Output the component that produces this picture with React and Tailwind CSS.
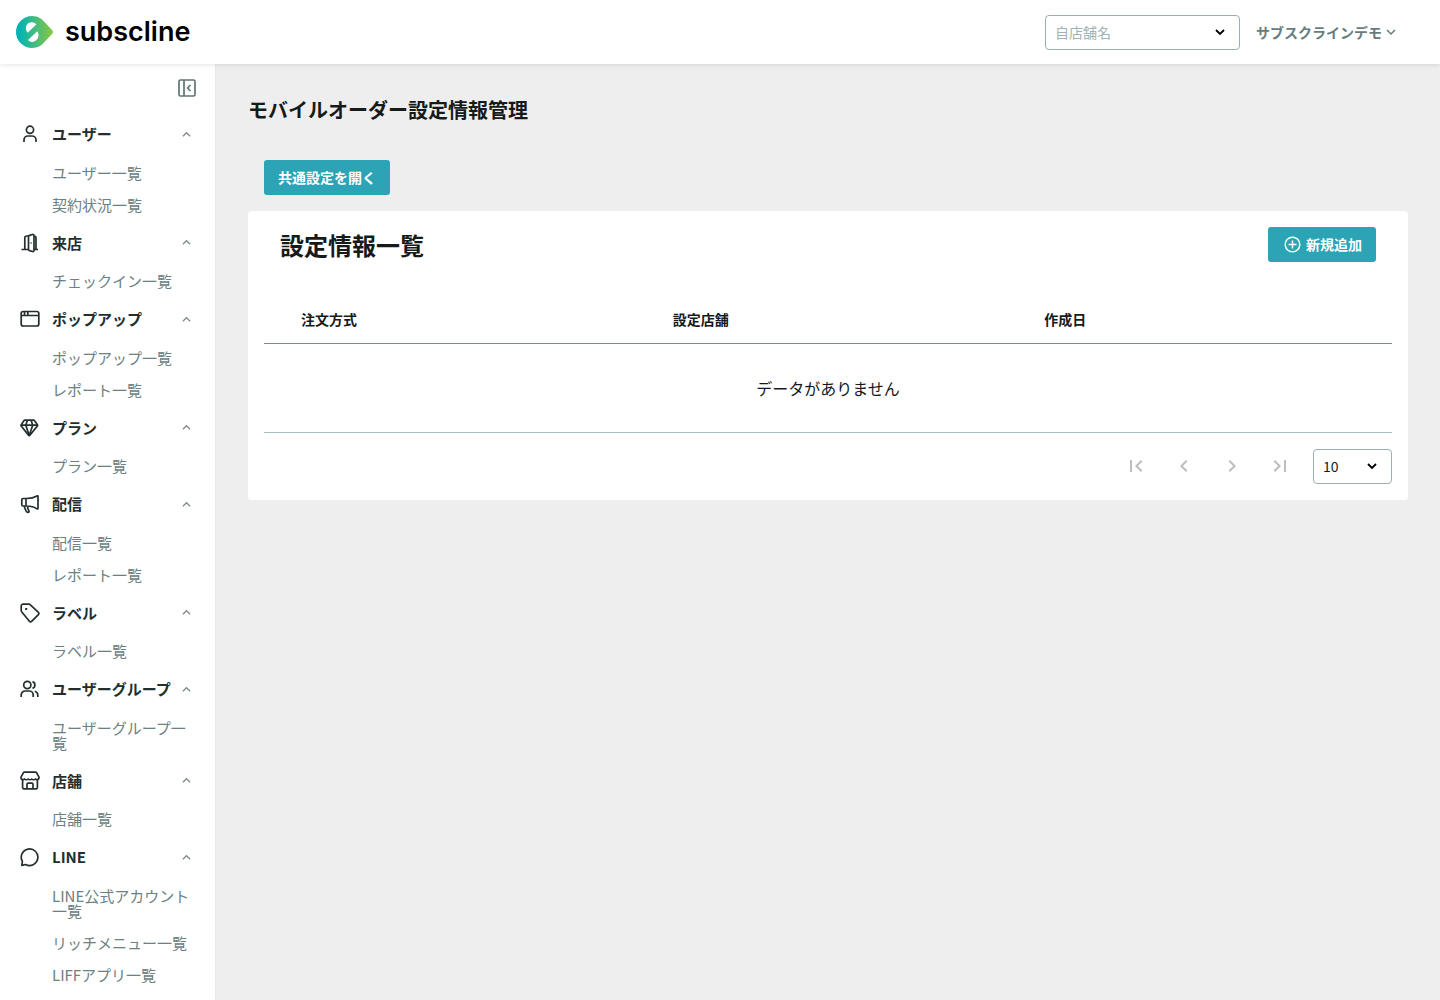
import React from "react";

const icons = {
  user: (
    <>
      <circle cx="10" cy="5.8" r="3.6" />
      <path d="M4 18v-2a4 4 0 0 1 4-4h4a4 4 0 0 1 4 4v2" />
    </>
  ),
  door: (
    <>
      <path d="M1.500 16.500h7M4.800 16.500V5a2 2 0 0 1 2-2h1.700M14 3a2 2 0 0 1 2 2v11.500M14 16.500h4" />
      <path d="M8.500 3.800a1.500 1.500 0 0 1 1-1.400l3-.9a1.200 1.200 0 0 1 1.500 1.200v14.600a1.200 1.200 0 0 1-1.500 1.200l-3-.9a1.500 1.500 0 0 1-1-1.400z" />
      <path d="M11 9.500v1" />
    </>
  ),
  window: (
    <>
      <rect x="1.200" y="2.500" width="17.600" height="14.500" rx="2" />
      <path d="M1.200 6.500h17.600M4.500 3V6M7.800 3V6" />
    </>
  ),
  diamond: (
    <>
      <path d="M5 2.200h8.500q.7 0 1.100.6l2.800 4q.4.6 0 1.200l-7.500 9.100q-.7.8-1.400 0L1.200 8q-.4-.6 0-1.200l2.700-4q.4-.6 1.100-.6z" />
      <path d="M1 7.200h16.600M7.300 2.500 5.800 7.200l3.400 10.300 3.500-10.300-1.500-4.700" />
    </>
  ),
  megaphone: (
    <>
      <path d="M3 4.500h3.500c4.500 0 8-1 10.500-2.500q1-.5 1 .5v11.800q0 1-1 .6c-2.500-1.800-6-2.900-10.500-2.900H3a1.200 1.200 0 0 1-1.200-1.200V5.700A1.200 1.200 0 0 1 3 4.500zM6 4.500v7.500" />
      <path d="m4.200 12.200 1.700 4.600a2.300 2.300 0 0 0 2 1.500c1.200 0 1.400-.8.900-1.600-.8-1.300-1.200-2.500-1.200-4.200" />
    </>
  ),
  tag: (
    <>
      <path d="M1.200 7.600V3a1.800 1.800 0 0 1 1.800-1.800h6a2 2 0 0 1 1.400.6l8 7.600a1.500 1.500 0 0 1 0 2.200l-6.800 6.700a1.500 1.500 0 0 1-2.200 0L1.800 9a2 2 0 0 1-.6-1.400z" />
      <path d="M5.200 6h2" strokeWidth="2" />
    </>
  ),
  users: (
    <>
      <circle cx="7.300" cy="6" r="3.600" />
      <path d="M1.200 18v-2a4 4 0 0 1 4-4h4a4 4 0 0 1 4 4v2M12.500 2.600a3.600 3.600 0 0 1 0 6.800M14.800 12.200a4 4 0 0 1 3 3.900v2" />
    </>
  ),
  store: (
    <>
      <path d="M2.600 9v7.600a1.200 1.200 0 0 0 1.200 1.200h12.400a1.200 1.200 0 0 0 1.200-1.200V9" />
      <path d="M4.600 1.200h10.800a1.500 1.500 0 0 1 1.300.7l2.300 4.300v.8a2.100 2.100 0 0 1-3.600 1 2.500 2.500 0 0 1-3.600 0 2.500 2.500 0 0 1-3.600 0 2.500 2.500 0 0 1-3.600 0A2.100 2.100 0 0 1 1 7v-.8l2.300-4.300a1.500 1.500 0 0 1 1.300-.7z" />
      <path d="M7 17.500v-4.300a1 1 0 0 1 1-1h4a1 1 0 0 1 1 1v4.300" />
    </>
  ),
  chat: <path d="M1.800 18.400l.6-4A8.300 8.300 0 1 1 5.600 17.500z" />,
};

const groups = [
  { icon: "user", label: "ユーザー", items: ["ユーザー一覧", "契約状況一覧"] },
  { icon: "door", label: "来店", items: ["チェックイン一覧"] },
  { icon: "window", label: "ポップアップ", items: ["ポップアップ一覧", "レポート一覧"] },
  { icon: "diamond", label: "プラン", items: ["プラン一覧"] },
  { icon: "megaphone", label: "配信", items: ["配信一覧", "レポート一覧"] },
  { icon: "tag", label: "ラベル", items: ["ラベル一覧"] },
  { icon: "users", label: "ユーザーグループ", items: ["ユーザーグループ一覧"] },
  { icon: "store", label: "店舗", items: ["店舗一覧"] },
  { icon: "chat", label: "LINE", items: ["LINE公式アカウント一覧", "リッチメニュー一覧", "LIFFアプリ一覧"] },
];

const pagers = [
  { label: "最初のページ", d: "M18.410 16.590 13.820 12l4.590-4.590L17 6l-6 6 6 6zM6 6h2v12H6z" },
  { label: "前のページ", d: "M15.410 7.410 14 6l-6 6 6 6 1.410-1.410L10.830 12z" },
  { label: "次のページ", d: "M10 6 8.590 7.410 13.170 12l-4.580 4.590L10 18l6-6z" },
  { label: "最後のページ", d: "M5.590 7.410 10.180 12l-4.590 4.590L7 18l6-6-6-6zM16 6h2v12h-2z" },
];

function Chevron({ className, up }) {
  return (
    <svg viewBox="0 0 10 10" className={className} fill="none" stroke="currentColor" aria-hidden="true">
      <path d={up ? "M1 7l4-4 4 4" : "M1 3l4 4 4-4"} />
    </svg>
  );
}

function SelectBox({ label, className, children }) {
  return (
    <div className="relative">
      <select
        aria-label={label}
        className={"block h-[35px] appearance-none rounded border border-[#9aafb0] bg-white pl-[9px] text-sm leading-5 " + className}
      >
        {children}
      </select>
      <Chevron className="pointer-events-none absolute top-3 right-[15px] size-[10px] stroke-[1.8] text-black" />
    </div>
  );
}

function Logo() {
  return (
    <a href="#" className="flex items-center gap-3 text-black">
      <svg viewBox="0 0 37 32" className="h-8 w-[37px]" aria-hidden="true">
        <defs>
          <linearGradient id="mark" x1="0" x2="1">
            <stop offset="0.1" stopColor="#04b4b5" />
            <stop offset="1" stopColor="#8bc63f" />
          </linearGradient>
        </defs>
        <path d="M16 0C22 0 26 3 28.500 6L36.500 14.500Q37.500 16 36.500 17.500L28.500 26C26 29 22 32 16 32A16 16 0 0 1 16 0Z" fill="url(#mark)" />
        <path d="M20.300 8.500C18.500 5.500 13 5.300 11 8.500C9.300 11 9.500 14.500 11.700 16.800Z" fill="#fff" />
        <path d="M21.300 15.200C23.200 18 22.700 21.500 21 23.500C18.500 26.700 14 26.700 12 24Z" fill="#fff" />
      </svg>
      <span className="font-['Inter'] text-[27px] leading-8 font-semibold">subscline</span>
    </a>
  );
}

function Sidebar() {
  return (
    <aside className="w-[216px] shrink-0 border-r border-[#e6e9e9] bg-white">
      <div className="flex h-12 items-center justify-end pr-[19px]">
        <button type="button" aria-label="メニューを閉じる" className="text-[#5f7576]">
          <svg viewBox="0 0 18 18" className="size-[18px]" fill="none" stroke="currentColor" strokeWidth="1.700">
            <rect x="1" y="1" width="16" height="16" rx="1.500" />
            <path d="M6 1v16M12.500 6 9.700 9l2.800 3" />
          </svg>
        </button>
      </div>
      <nav>
        {groups.map((g) => (
          <section key={g.label}>
            <button
              type="button"
              aria-expanded="true"
              className="flex w-full items-center py-[11px] pr-6 pl-5 text-[15px] leading-normal font-bold text-[#232f2f]"
            >
              <svg
                viewBox="0 0 20 20"
                className="mr-3 size-5 shrink-0"
                fill="none"
                stroke="currentColor"
                strokeWidth="1.700"
                strokeLinejoin="round"
                aria-hidden="true"
              >
                {icons[g.icon]}
              </svg>
              <span className="grow text-left whitespace-nowrap">{g.label}</span>
              <Chevron up className="size-[9px] shrink-0 stroke-[1.4] text-[#7f8c8d]" />
            </button>
            <ul>
              {g.items.map((item) => (
                <li key={item}>
                  <a href="#" className="block pt-2 pr-5 pb-[9px] pl-[52px] text-[15px] leading-[15px] text-[#6b8182]">
                    {item}
                  </a>
                </li>
              ))}
            </ul>
          </section>
        ))}
      </nav>
    </aside>
  );
}

export default function App() {
  return (
    <div className="flex h-screen flex-col overflow-hidden bg-[#eeeeee] font-['Noto_Sans_CJK_JP',sans-serif] text-[#151a1a]">
      <header className="z-10 flex h-16 shrink-0 items-center justify-between bg-white pr-11 pl-4 shadow-[0_1px_5px_rgba(0,0,0,0.1)]">
        <Logo />
        <div className="flex items-center gap-4">
          <SelectBox label="自店舗名" className="w-[195px] text-[#9eb3b4]">
            <option>自店舗名</option>
          </SelectBox>
          <button type="button" className="flex items-center gap-1 text-sm leading-5 font-bold text-[#667c7d]">
            サブスクラインデモ
            <Chevron className="size-[10px] stroke-[1.5]" />
          </button>
        </div>
      </header>

      <div className="flex min-h-0 grow">
        <Sidebar />
        <main className="min-w-0 grow px-8 pt-7">
          <h1 className="text-xl leading-9 font-bold">モバイルオーダー設定情報管理</h1>
          <div className="mt-8 pl-4">
            <button type="button" className="block h-[35px] rounded-[3px] bg-[#2ca4b5] px-[14px] pb-px text-sm leading-5 font-bold text-white">
              共通設定を開く
            </button>
          </div>

          <section className="mt-4 rounded bg-white p-4">
            <div className="flex items-center justify-between px-4">
              <h2 className="text-2xl leading-[35px] font-bold">設定情報一覧</h2>
              <button
                type="button"
                className="flex h-[35px] items-center gap-1 rounded-[3px] bg-[#2ca4b5] px-[14px] pb-px text-sm leading-5 font-bold text-white"
              >
                <svg viewBox="0 0 20 20" className="size-5" fill="none" stroke="currentColor" strokeWidth="1.500" aria-hidden="true">
                  <circle cx="10.500" cy="10.500" r="7.300" />
                  <path d="M10.500 6.500v8M6.500 10.500h8" />
                </svg>
                新規追加
              </button>
            </div>

            <table className="mt-[33px] w-full table-fixed border-collapse">
              <colgroup>
                <col className="w-[13px]" />
                <col />
                <col />
                <col />
              </colgroup>
              <thead>
                <tr className="h-12 border-b border-[#7a8b8c] text-left text-sm leading-5">
                  <td></td>
                  <th className="pl-6">注文方式</th>
                  <th className="pl-6">設定店舗</th>
                  <th className="pl-6">作成日</th>
                </tr>
              </thead>
              <tbody>
                <tr className="h-[89px] border-b border-[#adc0c1]">
                  <td colSpan={4} className="text-center text-base leading-6">
                    データがありません
                  </td>
                </tr>
              </tbody>
            </table>

            <div className="mt-4 flex items-center justify-end">
              {pagers.map((p) => (
                <button key={p.label} type="button" disabled aria-label={p.label} className="flex w-12 justify-center text-[#bdbdbd]">
                  <svg viewBox="0 0 24 24" className="size-6" fill="currentColor">
                    <path d={p.d} />
                  </svg>
                </button>
              ))}
              <div className="ml-[9px]">
                <SelectBox label="表示件数" className="w-[79px] text-[#151a1a]">
                  <option>10</option>
                </SelectBox>
              </div>
            </div>
          </section>
        </main>
      </div>
    </div>
  );
}
